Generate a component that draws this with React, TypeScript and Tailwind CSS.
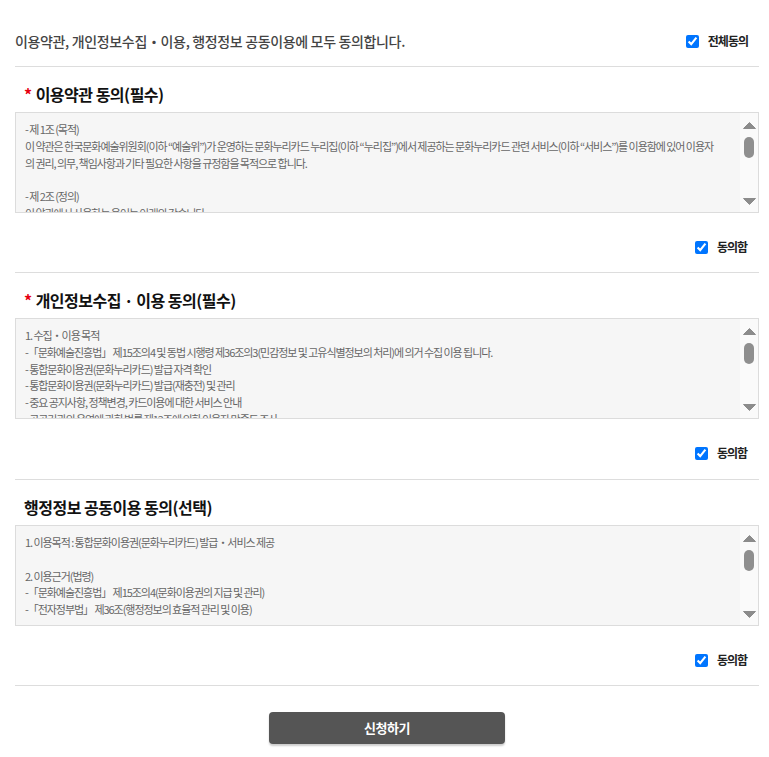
import React from 'react';

const KR = { fontFamily: '"Noto Sans CJK KR", "Noto Sans", sans-serif' };

const terms = [
  '- 제 1조 (목적)',
  '이 약관은 한국문화예술위원회(이하 “예술위”)가 운영하는 문화누리카드 누리집(이하 “누리집”)에서 제공하는 문화누리카드 관련 서비스(이하 “서비스”)를 이용함에 있어 이용자',
  '의 권리, 의무, 책임사항과 기타 필요한 사항을 규정함을 목적으로 합니다.',
  '',
  '- 제 2조 (정의)',
  '이 약관에서 사용하는 용어는 아래와 같습니다.',
];

const privacy = [
  '1. 수집・이용 목적',
  '-「문화예술진흥법」 제15조의4 및 동법 시행령 제36조의3(민감정보 및 고유식별정보의 처리)에 의거 수집 이용 됩니다.',
  '- 통합문화이용권(문화누리카드) 발급 자격 확인',
  '- 통합문화이용권(문화누리카드) 발급(재충전) 및 관리',
  '- 중요 공지사항, 정책변경, 카드이용에 대한 서비스 안내',
  '- 공공기관의 운영에 관한 법률 제12조에 의한 이용자 만족도 조사',
];

const shared = [
  '1. 이용목적 : 통합문화이용권(문화누리카드) 발급・서비스 제공',
  '',
  '2. 이용근거(법령)',
  '-「문화예술진흥법」 제15조의4(문화이용권의 지급 및 관리)',
  '-「전자정부법」 제36조(행정정보의 효율적 관리 및 이용)',
];

function CheckLabel({ label }: { label: string }) {
  return (
    <label className="flex items-center gap-[9px]">
      <input
        type="checkbox"
        defaultChecked
        className="m-0 size-[13px] accent-[#0075ff]"
      />
      <span className="text-[12px] font-bold tracking-[-1px] text-[#222]">
        {label}
      </span>
    </label>
  );
}

function ScrollTrack() {
  return (
    <div className="flex w-[18px] shrink-0 flex-col items-center bg-[#fafafa] pt-[9px] pb-[7px]">
      <svg width="13" height="7" viewBox="0 0 13 7">
        <path d="M6.5 0.5 L12.5 6.5 L0.5 6.5 Z" fill="#8c8c8c" strokeLinejoin="round" stroke="#8c8c8c" />
      </svg>
      <div className="mt-[8px] h-[21px] w-[10px] rounded-full bg-[#8f8f8f]"></div>
      <div className="flex-1"></div>
      <svg width="13" height="7" viewBox="0 0 13 7">
        <path d="M0.5 0.5 L12.5 0.5 L6.5 6.5 Z" fill="#8c8c8c" strokeLinejoin="round" stroke="#8c8c8c" />
      </svg>
    </div>
  );
}

function TermBox({ lines }: { lines: string[] }) {
  return (
    <div className="mt-[7px] flex h-[101px] border border-[#dcdcdc] bg-[#f6f6f6]">
      <div className="min-w-0 flex-1 overflow-hidden pt-[8px] pl-[9px] text-[11px] leading-[16.8px] tracking-[-1.05px] text-[#666]">
        {lines.map((line, i) => (
          <div key={i} className="h-[16.8px] whitespace-nowrap">
            {line}
          </div>
        ))}
      </div>
      <ScrollTrack />
    </div>
  );
}

function Section({
  title,
  required,
  lines,
  extra,
}: {
  title: string;
  required?: boolean;
  lines: string[];
  extra?: boolean;
}) {
  return (
    <div className={`border-b border-[#dddddd] ${extra ? 'pb-[16px]' : 'pb-[15px]'}`}>
      <h3 className="mt-[16px] flex h-[22px] items-center pl-[9px] text-[16px] font-bold tracking-[-0.5px] text-[#111]">
        {required && <span className="mr-[4px] text-[#e60012]">*</span>}
        {title}
      </h3>
      <TermBox lines={lines} />
      <div className="mt-[24px] flex h-[20px] justify-end pr-[12px]">
        <CheckLabel label="동의함" />
      </div>
    </div>
  );
}

export default function App() {
  return (
    <div className="min-h-[757px] bg-white pr-[10px] pl-[15px]" style={KR}>
      <div className="flex h-[67px] items-center justify-between border-b border-[#dddddd] pt-[16px]">
        <p className="text-[14px] font-medium tracking-[-0.35px] text-[#444]">
          이용약관, 개인정보수집・이용, 행정정보 공동이용에 모두 동의합니다.
        </p>
        <div className="pr-[11px]">
          <CheckLabel label="전체동의" />
        </div>
      </div>
      <Section title="이용약관 동의(필수)" required lines={terms} />
      <Section title="개인정보수집 · 이용 동의(필수)" required lines={privacy} extra />
      <Section title="행정정보 공동이용 동의(선택)" lines={shared} />
      <div className="flex justify-center pt-[26px]">
        <button className="h-[32px] w-[236px] rounded-[4px] bg-[#555555] text-[13px] font-bold tracking-[-0.5px] text-white shadow-[0_2px_2px_rgba(0,0,0,0.2)]">
          신청하기
        </button>
      </div>
    </div>
  );
}
